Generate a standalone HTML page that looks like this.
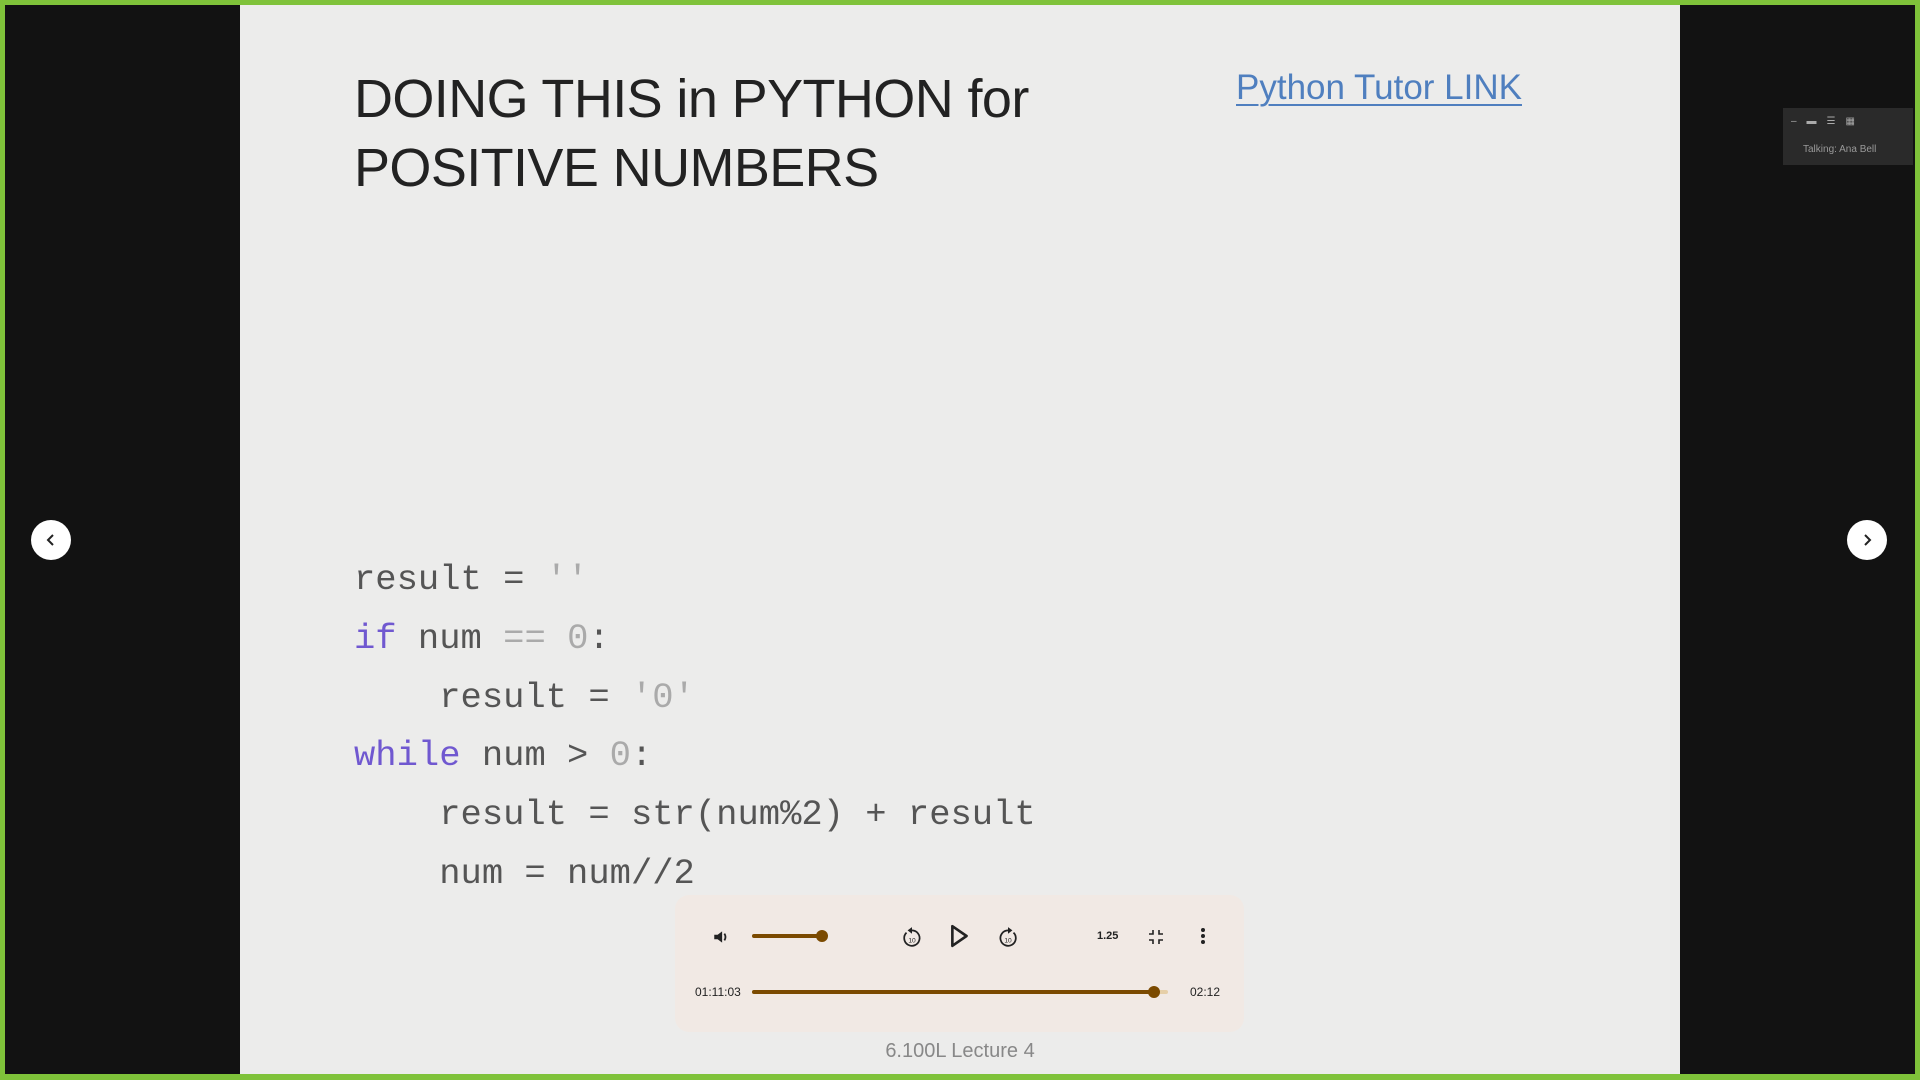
<!DOCTYPE html>
<html><head><meta charset="utf-8"><style>
*{margin:0;padding:0;box-sizing:border-box}
body{width:1920px;height:1080px;background:#7fc23a;position:relative;overflow:hidden;font-family:"Liberation Sans",sans-serif}
.inner{position:absolute;left:5px;top:5px;width:1910px;height:1069px;background:#121212}
.slide{position:absolute;left:240px;top:5px;width:1440px;height:1069px;background:#ececeb}
.title{position:absolute;left:354px;top:65px;font-size:54px;line-height:69px;color:#222;font-family:"Liberation Sans",sans-serif;letter-spacing:-0.6px}
.link{position:absolute;left:1236px;top:68px;font-size:35px;color:#4f7fbf;text-decoration:underline;text-decoration-thickness:2px;text-underline-offset:5px}
.code{position:absolute;left:354px;top:551px;font-family:"Liberation Mono",monospace;font-size:35.5px;line-height:58.8px;color:#555;white-space:pre}
.k{color:#7058d0}.n{color:#aaa}
.nav{position:absolute;width:40px;height:40px;border-radius:50%;background:#fff;top:520px}
.nav svg{position:absolute;left:12px;top:12px}
.player{position:absolute;left:675px;top:895px;width:569px;height:137px;background:#f1e9e4;border-radius:14px}
.t{position:absolute;font-size:12px;color:#222}
.cap{position:absolute;left:0;width:1920px;top:1040px;text-align:center;font-size:20px;color:#888}
.widget{position:absolute;left:1783px;top:108px;width:130px;height:57px;background:#2a2a2a}
</style></head><body>
<div class="inner"></div>
<div class="slide"></div>
<div class="title">DOING THIS in PYTHON for<br>POSITIVE NUMBERS</div>
<div class="link">Python Tutor LINK</div>
<div class="code">result = <span class="n">''</span>
<span class="k">if</span> num <span class="n">==</span> <span class="n">0</span>:
    result = <span class="n">'0'</span>
<span class="k">while</span> num &gt; <span class="n">0</span>:
    result = str(num%2) + result
    num = num//2</div>
<div class="nav" style="left:31px"><svg width="16" height="16" viewBox="0 0 16 16"><path d="M10 3L5 8l5 5" stroke="#222" stroke-width="2" fill="none"/></svg></div>
<div class="nav" style="left:1847px"><svg width="16" height="16" viewBox="0 0 16 16"><path d="M6 3l5 5-5 5" stroke="#222" stroke-width="2" fill="none"/></svg></div>
<div class="widget"><div style="position:absolute;left:8px;top:8px;width:112px;height:14px;color:#aaa;font-size:10px;letter-spacing:10px">‒▬☰▦</div><div style="position:absolute;left:20px;top:36px;font-size:10px;color:#999">Talking: Ana Bell</div></div>
<div class="player">
<svg style="position:absolute;left:37px;top:33px" width="18" height="18" viewBox="0 0 16 16"><path d="M2 6h3l4-3v10l-4-3H2z" fill="#222"/><path d="M11 5q2 3 0 6" stroke="#222" stroke-width="1.6" fill="none"/></svg>
<div style="position:absolute;left:77px;top:39px;width:70px;height:4px;background:#7b4a00;border-radius:2px"></div>
<div style="position:absolute;left:141px;top:35px;width:12px;height:12px;background:#7b4a00;border-radius:50%"></div>
<svg style="position:absolute;left:227px;top:31px" width="20" height="22" viewBox="0 0 18 20"><path d="M4 6a7 7 0 1 0 5-2" stroke="#222" stroke-width="1.6" fill="none"/><path d="M9 1v6L5 4z" fill="#222"/><text x="9" y="15" font-size="6" text-anchor="middle" fill="#222">10</text></svg>
<svg style="position:absolute;left:275px;top:29px" width="20" height="24" viewBox="0 0 18 22"><path d="M2 2l13 9-13 9z" stroke="#222" stroke-width="2.4" fill="none" stroke-linejoin="round"/></svg>
<svg style="position:absolute;left:323px;top:31px" width="20" height="22" viewBox="0 0 18 20"><path d="M14 6a7 7 0 1 1-5-2" stroke="#222" stroke-width="1.6" fill="none"/><path d="M9 1v6l4-3z" fill="#222"/><text x="9" y="15" font-size="6" text-anchor="middle" fill="#222">10</text></svg>
<div class="t" style="left:422px;top:35px;font-size:11px;font-weight:bold">1.25</div>
<svg style="position:absolute;left:474px;top:35px" width="14" height="14" viewBox="0 0 14 14"><path d="M4 0v4H0M10 0v4h4M4 14v-4H0M10 14v-4h4" stroke="#222" stroke-width="1.6" fill="none"/></svg>
<svg style="position:absolute;left:525px;top:32px" width="6" height="18" viewBox="0 0 6 18"><circle cx="3" cy="3" r="2" fill="#222"/><circle cx="3" cy="9" r="2" fill="#222"/><circle cx="3" cy="15" r="2" fill="#222"/></svg>
<div class="t" style="left:20px;top:90px">01:11:03</div>
<div style="position:absolute;left:77px;top:95px;width:416px;height:4px;background:#e6cfa8;border-radius:2px"></div>
<div style="position:absolute;left:77px;top:95px;width:402px;height:4px;background:#7b4a00;border-radius:2px"></div>
<div style="position:absolute;left:473px;top:91px;width:12px;height:12px;background:#7b4a00;border-radius:50%"></div>
<div class="t" style="left:515px;top:90px">02:12</div>
</div>
<div class="cap" style="left:0">6.100L Lecture 4</div>
</body></html>
